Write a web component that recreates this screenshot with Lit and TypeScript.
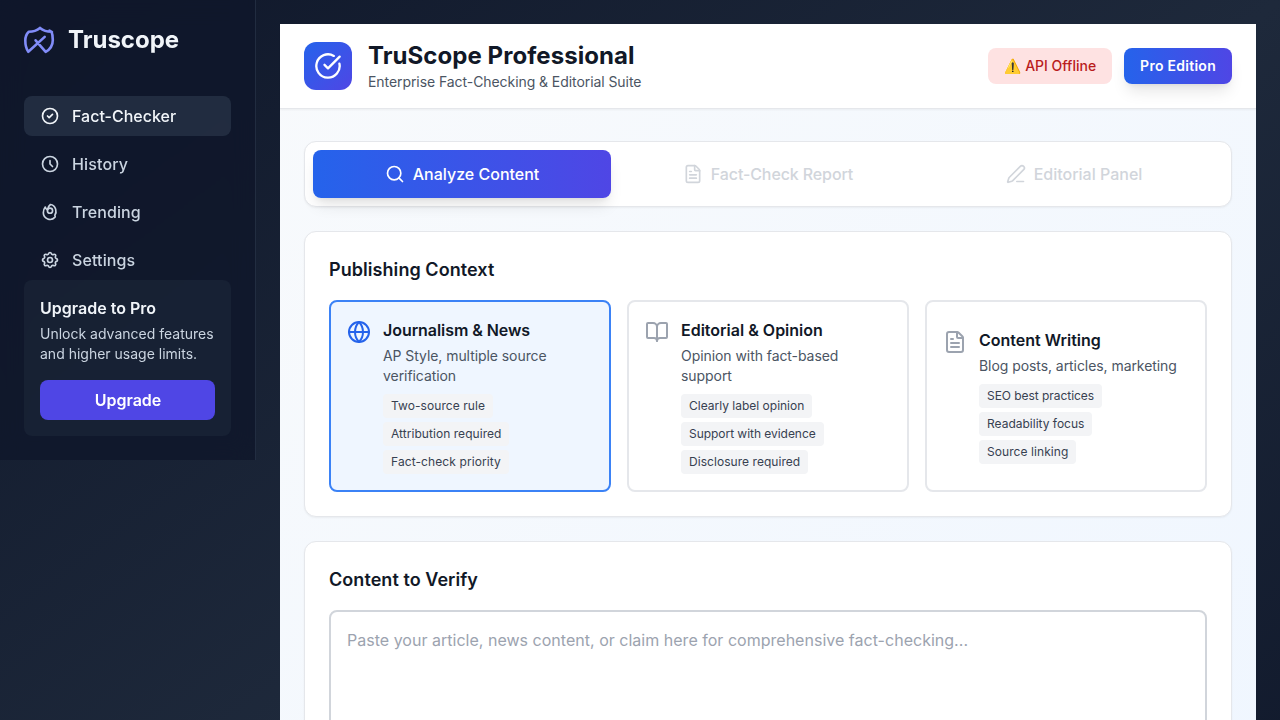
import { LitElement, html, css, svg } from "lit";
import { customElement } from "lit/decorators.js";
import { styleMap } from "lit/directives/style-map.js";

const stroke = (size: number, width: number, body: unknown) => html`<svg
  width=${size}
  height=${size}
  viewBox="0 0 24 24"
  fill="none"
  stroke="currentColor"
  stroke-width=${width}
  stroke-linecap="round"
  stroke-linejoin="round"
>${body}</svg>`;

const tracking = (px: number) => styleMap({ letterSpacing: `${px}px` });

type Label = [text: string, tracking: number];

const icons = {
  check: svg`<path d="M9 12l2 2 4-4m6 2a9 9 0 11-18 0 9 9 0 0118 0z"/>`,
  clock: svg`<path d="M12 8v4l3 3m6-3a9 9 0 11-18 0 9 9 0 0118 0z"/>`,
  fire: svg`<path d="M6.300 6C4.600 8 4 10.700 4 13a8 8 0 0 0 14 5.200c.6-.8.2-1.500-.2-2.200C19.200 14 19.500 11 18.800 8.600 17.700 5.300 15.500 3.200 12.500 3 10.300 4.600 9.200 7 9 9.500 8 9 6.800 8.300 6.300 6z"/><circle cx="12" cy="10.400" r="3.100"/>`,
  cog: svg`<path d="M10.325 4.317c.426-1.756 2.924-1.756 3.35 0a1.724 1.724 0 002.573 1.066c1.543-.94 3.31.826 2.37 2.37a1.724 1.724 0 001.065 2.572c1.756.426 1.756 2.924 0 3.35a1.724 1.724 0 00-1.066 2.573c.94 1.543-.826 3.31-2.37 2.37a1.724 1.724 0 00-2.572 1.065c-.426 1.756-2.924 1.756-3.35 0a1.724 1.724 0 00-2.573-1.066c-1.543.94-3.31-.826-2.37-2.37a1.724 1.724 0 00-1.065-2.572c-1.756-.426-1.756-2.924 0-3.35a1.724 1.724 0 001.066-2.573c-.94-1.543.826-3.31 2.37-2.37.996.608 2.296.07 2.572-1.065z"/><path d="M15 12a3 3 0 11-6 0 3 3 0 016 0z"/>`,
  checkBig: svg`<path d="M21.801 10A10 10 0 1 1 17 3.335"/><path d="m9 11 3 3L22 4"/>`,
  search: svg`<path d="m21 21-4.34-4.34"/><circle cx="11" cy="11" r="8"/>`,
  file: svg`<path d="M6 22a2 2 0 0 1-2-2V4a2 2 0 0 1 2-2h8a2.4 2.4 0 0 1 1.704.706l3.588 3.588A2.4 2.4 0 0 1 20 8v12a2 2 0 0 1-2 2z"/><path d="M14 2v5a1 1 0 0 0 1 1h5"/><path d="M10 9H8"/><path d="M16 13H8"/><path d="M16 17H8"/>`,
  pen: svg`<path d="M13 21h8"/><path d="M21.174 6.812a1 1 0 0 0-3.986-3.987L3.842 16.174a2 2 0 0 0-.5.83l-1.321 4.352a.5.5 0 0 0 .623.622l4.353-1.32a2 2 0 0 0 .83-.497z"/>`,
  globe: svg`<circle cx="12" cy="12" r="10"/><path d="M12 2a14.5 14.5 0 0 0 0 20 14.5 14.5 0 0 0 0-20"/><path d="M2 12h20"/>`,
  book: svg`<path d="M12 7v14"/><path d="M3 18a1 1 0 0 1-1-1V4a1 1 0 0 1 1-1h5a4 4 0 0 1 4 4 4 4 0 0 1 4-4h5a1 1 0 0 1 1 1v13a1 1 0 0 1-1 1h-6a3 3 0 0 0-3 3 3 3 0 0 0-3-3z"/>`,
};

const base = css`
  * { box-sizing: border-box; margin: 0; }
  svg { display: block; flex-shrink: 0; }
  button { font: inherit; border: 0; cursor: pointer; }
`;

@customElement("app-sidebar")
class AppSidebar extends LitElement {
  static styles = [base, css`
    :host {
      display: flex; flex-direction: column; box-sizing: border-box;
      width: 256px; flex-shrink: 0; padding: 24px; color: #f1f5f9;
      background: rgba(15, 23, 42, 0.8); border-right: 1px solid rgba(51, 65, 85, 0.5);
      backdrop-filter: blur(12px);
    }
    .brand { display: flex; align-items: center; gap: 12px; height: 32px; margin-bottom: 40px; }
    .brand svg { color: #818cf8; }
    .name { font-size: 24px; line-height: 32px; font-weight: 700; }
    .nav { display: flex; flex-direction: column; gap: 8px; }
    .item {
      display: flex; align-items: center; gap: 12px; height: 40px; padding: 0 16px;
      border-radius: 8px; font-size: 16px; line-height: 24px; font-weight: 500; color: #cbd5e1;
    }
    .active { background: rgba(51, 65, 85, 0.5); color: #f1f5f9; }
    .promo { padding: 16px; border-radius: 8px; background: rgba(30, 41, 59, 0.5); }
    .title { font-size: 16px; line-height: 24px; font-weight: 600; }
    .desc { font-size: 14px; line-height: 20px; color: #cbd5e1; margin: 4px 0 16px; }
    .upgrade {
      display: block; width: 100%; height: 40px; border-radius: 8px; text-indent: 1px;
      background: #4f46e5; color: #fff; font-weight: 600;
    }
  `];
  render() {
    const items: [Label, unknown][] = [
      [["Fact-Checker", 0], icons.check],
      [["History", 0.14], icons.clock],
      [["Trending", 0.12], icons.fire],
      [["Settings", 0.12], icons.cog],
    ];
    return html`
      <div class="brand">
        <svg width="32" height="32" viewBox="0 0 32 32" fill="none" stroke="currentColor" stroke-width="2.6" stroke-linecap="round" stroke-linejoin="round">
          <path d="M16 4C13 6.500 9 7.800 4.800 7.800 2.500 10 1.300 13 1.300 16.500c0 4.500 1 8.500 3 11.300L20.700 12.900M11.600 16.300L21.700 27.800C26 25.500 28.800 21.500 28.800 16c0-3-.3-6-1.300-8.200C23 7.800 19 6.500 16 4M25.500 6.500L28 8"/>
        </svg>
        <span class="name">Truscope</span>
      </div>
      <nav class="nav">
        ${items.map(([[label, px], icon], i) => html`<a class="item ${i === 0 ? "active" : ""}">${stroke(20, 2, icon)}<span style=${tracking(px)}>${label}</span></a>`)}
      </nav>
      <div class="promo">
        <h3 class="title">Upgrade to Pro</h3>
        <p class="desc">Unlock advanced features and higher usage limits.</p>
        <button class="upgrade">Upgrade</button>
      </div>`;
  }
}

@customElement("context-card")
class ContextCard extends LitElement {
  static properties = {
    heading: {}, text: {}, icon: { attribute: false },
    tags: { attribute: false }, selected: { type: Boolean, reflect: true },
  };
  declare heading: string;
  declare text: string;
  declare icon: unknown;
  declare tags: Label[];
  declare selected: boolean;
  static styles = [base, css`
    :host {
      display: flex; flex-direction: column; justify-content: center; box-sizing: border-box;
      padding: 16px; border: 2px solid #e5e7eb; border-radius: 8px; background: #fff; color: #9ca3af;
    }
    :host([selected]) { border-color: #3b82f6; background: #eff6ff; color: #2563eb; }
    :host([selected]) .heading { letter-spacing: -0.06px; }
    .row { display: flex; align-items: flex-start; gap: 12px; }
    .row svg { margin-top: 2px; }
    .body { flex: 1; min-width: 0; }
    .heading { font-size: 16px; line-height: 24px; font-weight: 600; color: #111827; }
    .text { font-size: 14px; line-height: 20px; letter-spacing: -0.065px; color: #4b5563; margin: 4px 0 8px; }
    .tags { display: flex; flex-direction: column; align-items: flex-start; gap: 4px; }
    .tag { padding: 4px 8px; border-radius: 4px; background: #f3f4f6; color: #374151; font-size: 12px; line-height: 16px; }
  `];
  render() {
    return html`<div class="row">
      ${stroke(24, 2, this.icon)}
      <div class="body">
        <h3 class="heading">${this.heading}</h3>
        <p class="text">${this.text}</p>
        <div class="tags">${this.tags.map(([t, px]) => html`<span class="tag" style=${tracking(px)}>${t}</span>`)}</div>
      </div>
    </div>`;
  }
}

@customElement("app-root")
class AppRoot extends LitElement {
  static styles = [base, css`
    :host {
      display: flex; align-items: flex-start; height: 720px; overflow: hidden;
      font-family: Inter, sans-serif; font-size: 16px; line-height: 24px;
      background: linear-gradient(to bottom right, #0f172a, #1e293b, #0f172a) 0 0 / 100% 950px;
    }
    .main { flex: 1; min-width: 0; padding: 24px; }
    .suite { height: 900px; background: linear-gradient(to bottom right, #f8fafc, #eff6ff); }
    .header {
      display: flex; align-items: center; justify-content: space-between; height: 85px; padding: 0 24px;
      background: #fff; border-bottom: 1px solid #e5e7eb; box-shadow: 0 1px 2px rgba(0, 0, 0, 0.05);
    }
    .brand, .actions { display: flex; align-items: center; }
    .brand { gap: 16px; }
    .actions { gap: 12px; }
    .logo {
      display: grid; place-items: center; width: 48px; height: 48px; border-radius: 12px; color: #fff;
      background: linear-gradient(to bottom right, #2563eb, #4f46e5);
    }
    .title { font-size: 24px; line-height: 32px; font-weight: 700; letter-spacing: 0.06px; color: #111827; }
    .subtitle { font-size: 14px; line-height: 20px; letter-spacing: -0.07px; color: #4b5563; }
    .pill { padding: 8px 16px; border-radius: 8px; font-size: 14px; line-height: 20px; font-weight: 500; }
    .offline { background: #fee2e2; color: #b91c1c; }
    .edition {
      color: #fff; font-weight: 600; letter-spacing: 0.27px; background: linear-gradient(to right, #2563eb, #4f46e5);
      box-shadow: 0 10px 15px -3px rgba(0, 0, 0, 0.1), 0 4px 6px -4px rgba(0, 0, 0, 0.1);
    }
    .content { display: flex; flex-direction: column; gap: 24px; padding: 32px 24px; }
    .panel { background: #fff; border: 1px solid #e5e7eb; border-radius: 12px; box-shadow: 0 1px 2px rgba(0, 0, 0, 0.05); }
    .tabs { display: flex; gap: 8px; padding: 8px; }
    .tab {
      flex: 1; display: flex; align-items: center; justify-content: center; gap: 8px; height: 48px;
      border-radius: 8px; background: none; color: #d1d5db; font-weight: 500; padding: 0 24px;
    }
    .report { letter-spacing: -0.11px; }
    .current {
      color: #fff; background: linear-gradient(to right, #2563eb, #4f46e5);
      box-shadow: 0 10px 15px -3px rgba(0, 0, 0, 0.1), 0 4px 6px -4px rgba(0, 0, 0, 0.1);
    }
    .section { padding: 24px; }
    .section-title {
      font-size: 18px; line-height: 28px; font-weight: 600; letter-spacing: 0.06px;
      color: #111827; margin-bottom: 16px;
    }
    .cards { display: grid; grid-template-columns: repeat(3, 1fr); gap: 16px; }
    .input {
      display: block; width: 100%; height: 256px; padding: 16px; border: 2px solid #d1d5db; border-radius: 8px;
      background: #fff; font: inherit; letter-spacing: 0.017px; resize: none; outline: none;
    }
    .input::placeholder { color: #9ca3af; }
  `];
  render() {
    return html`
      <app-sidebar></app-sidebar>
      <main class="main">
        <div class="suite">
          <header class="header">
            <div class="brand">
              <div class="logo">${stroke(28, 2, icons.checkBig)}</div>
              <div>
                <h1 class="title">TruScope Professional</h1>
                <p class="subtitle">Enterprise Fact-Checking &amp; Editorial Suite</p>
              </div>
            </div>
            <div class="actions">
              <div class="pill offline">⚠️ API Offline</div>
              <div class="pill edition">Pro Edition</div>
            </div>
          </header>
          <div class="content">
            <div class="panel tabs">
              <button class="tab current">${stroke(20, 2, icons.search)}<span>Analyze Content</span></button>
              <button class="tab report">${stroke(20, 2, icons.file)}<span>Fact-Check Report</span></button>
              <button class="tab">${stroke(20, 2, icons.pen)}<span>Editorial Panel</span></button>
            </div>
            <section class="panel section">
              <h2 class="section-title">Publishing Context</h2>
              <div class="cards">
                <context-card selected heading="Journalism &amp; News" text="AP Style, multiple source verification"
                  .icon=${icons.globe} .tags=${[["Two-source rule", 0.07], ["Attribution required", 0.05], ["Fact-check priority", 0.1]]}></context-card>
                <context-card heading="Editorial &amp; Opinion" text="Opinion with fact-based support"
                  .icon=${icons.book} .tags=${[["Clearly label opinion", 0], ["Support with evidence", -0.04], ["Disclosure required", 0.05]]}></context-card>
                <context-card heading="Content Writing" text="Blog posts, articles, marketing"
                  .icon=${icons.file} .tags=${[["SEO best practices", -0.05], ["Readability focus", 0], ["Source linking", 0.07]]}></context-card>
              </div>
            </section>
            <section class="panel section">
              <h2 class="section-title">Content to Verify</h2>
              <textarea class="input" placeholder="Paste your article, news content, or claim here for comprehensive fact-checking..."></textarea>
            </section>
          </div>
        </div>
      </main>`;
  }
}
